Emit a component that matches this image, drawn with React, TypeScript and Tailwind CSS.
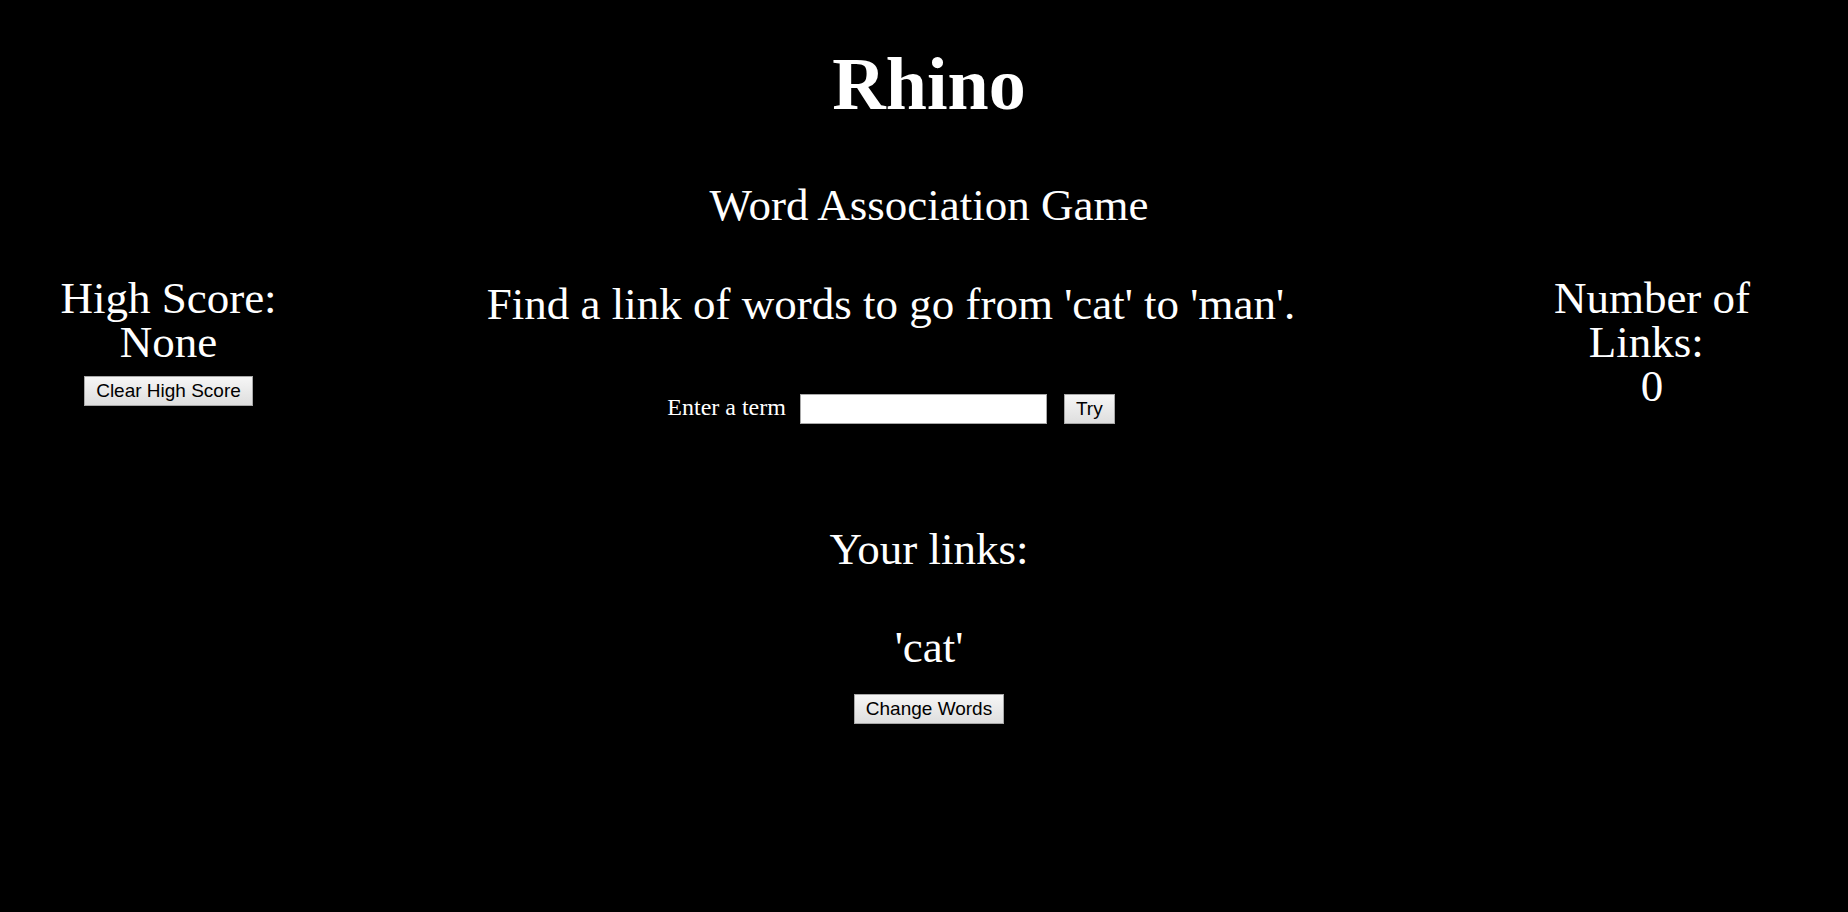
import React from "react";

const btn =
  "inline-flex items-center justify-center h-[30px] px-[11px] border border-[#a8a8a8] bg-gradient-to-b from-[#f6f6f6] to-[#dedede] text-black text-[19px] leading-[22px] font-['Liberation_Sans',Arial,sans-serif]";

export default function App() {
  return (
    <div className="min-h-[912px] bg-black text-white font-['Liberation_Serif','Times_New_Roman',serif]">
      <div className="pl-[10px] text-center">
        <h1 className="pt-[44px] text-[74px] font-bold leading-[80px]">Rhino</h1>
        <h2 className="mt-[56px] text-[45px] leading-[50px]">Word Association Game</h2>
      </div>

      <div className="mt-[46px] flex items-start text-center">
        <div className="w-[337px] shrink-0 flex flex-col items-center">
          <div className="text-[45px] leading-[44px]">High Score:</div>
          <div className="text-[45px] leading-[44px]">None</div>
          <button className={`${btn} mt-[12px]`}>Clear High Score</button>
        </div>

        <div className="w-[1108px] shrink-0 flex flex-col items-center">
          <div className="mt-[6px] text-[45px] leading-[44px] whitespace-nowrap">
            Find a link of words to go from 'cat' to 'man'.
          </div>
          <div className="mt-[67px] flex items-center justify-center">
            <span className="text-[24px] leading-[28px] pb-[4px] mr-[14px]">Enter a term</span>
            <input
              type="text"
              className="w-[247px] h-[30px] bg-white border border-[#a9a9a9] text-black outline-none px-[2px]"
            />
            <button className={`${btn} ml-[17px]`}>Try</button>
          </div>
        </div>

        <div className="w-[260px] shrink-0 ml-[77px] text-[45px] leading-[44px]">
          <div>Number of Links:{"\u00a0"}</div>
          <div>0</div>
        </div>
      </div>

      <div className="mt-[102px] pl-[10px] flex flex-col items-center text-center">
        <div className="text-[45px] leading-[44px]">Your links:</div>
        <div className="mt-[54px] text-[45px] leading-[44px]">'cat'</div>
        <button className={`${btn} mt-[25px]`}>Change Words</button>
      </div>
    </div>
  );
}
